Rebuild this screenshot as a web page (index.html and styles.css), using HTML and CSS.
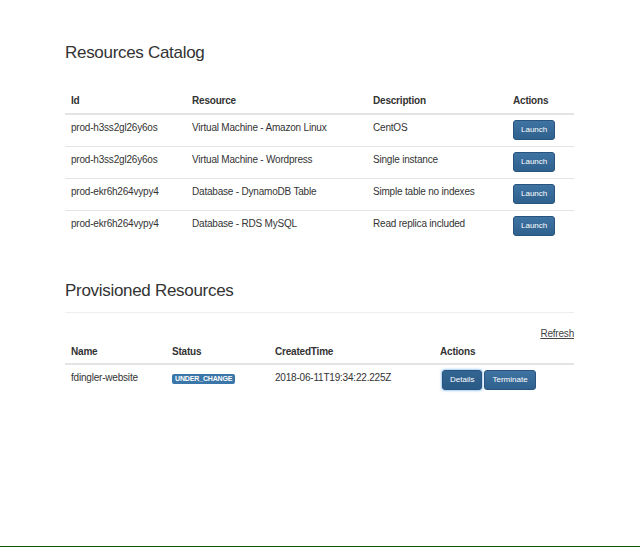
FILE: index.html
```html
<!DOCTYPE html>
<html lang="en">
<head>
<meta charset="utf-8">
<title>Resources</title>
<link rel="stylesheet" href="styles.css">
</head>
<body>
<div class="page">
  <div class="container">
    <h2 class="title">Resources Catalog</h2>
    <table class="table catalog">
      <colgroup>
        <col class="c-id"><col class="c-res"><col class="c-desc"><col class="c-act">
      </colgroup>
      <thead>
        <tr><th>Id</th><th>Resource</th><th>Description</th><th>Actions</th></tr>
      </thead>
      <tbody>
        <tr><td>prod-h3ss2gl26y6os</td><td>Virtual Machine - Amazon Linux</td><td>CentOS</td><td><button class="btn">Launch</button></td></tr>
        <tr><td>prod-h3ss2gl26y6os</td><td>Virtual Machine - Wordpress</td><td>Single instance</td><td><button class="btn">Launch</button></td></tr>
        <tr><td>prod-ekr6h264vypy4</td><td>Database - DynamoDB Table</td><td>Simple table no indexes</td><td><button class="btn">Launch</button></td></tr>
        <tr><td>prod-ekr6h264vypy4</td><td>Database - RDS MySQL</td><td>Read replica included</td><td><button class="btn">Launch</button></td></tr>
      </tbody>
    </table>

    <h2 class="title title-second">Provisioned Resources</h2>
    <hr class="rule">
    <div class="refresh-row"><a class="refresh" href="#">Refresh</a></div>
    <table class="table provisioned">
      <colgroup>
        <col class="c-name"><col class="c-status"><col class="c-time"><col class="c-act2">
      </colgroup>
      <thead>
        <tr><th>Name</th><th>Status</th><th>CreatedTime</th><th>Actions</th></tr>
      </thead>
      <tbody>
        <tr>
          <td>fdingler-website</td>
          <td><span class="label">UNDER_CHANGE</span></td>
          <td>2018-06-11T19:34:22.225Z</td>
          <td><div class="btn-group"><button class="btn btn-focus">Details</button><button class="btn">Terminate</button></div></td>
        </tr>
      </tbody>
    </table>
  </div>
</div>
</body>
</html>
```
FILE: styles.css
```css
* { box-sizing: border-box; }
html, body { margin: 0; padding: 0; background: #fff; }
body {
  font-family: "Liberation Sans", Arial, Helvetica, sans-serif;
  font-size: 10px;
  letter-spacing: -0.2px;
  color: #333;
}
.page {
  min-height: 547px;
  border-bottom: 1px solid #0b560b;
  padding-top: 43px;
}
.container {
  margin-left: 65px;
  width: 509px;
}
.title {
  margin: 0;
  font-size: 17px;
  line-height: 20px;
  letter-spacing: -0.3px;
  font-weight: normal;
  color: #333;
}
.catalog { margin-top: 21px; }
.title-second { margin-top: 39px; }
.rule {
  margin: 11px 0 0;
  border: 0;
  border-top: 1px solid #eee;
  height: 0;
}
.refresh-row {
  margin-top: 14px;
  text-align: right;
  line-height: 14px;
}
.refresh {
  color: #444;
  text-decoration: underline;
  font-size: 10px;
}
.table {
  width: 509px;
  border-collapse: collapse;
  table-layout: fixed;
}
.table th {
  text-align: left;
  font-weight: bold;
  line-height: 16px;
  padding: 9px 6px 4px;
  border-bottom: 2px solid #e4e4e4;
  vertical-align: bottom;
}
.provisioned th { padding: 3px 6px 3px; }
.table td {
  padding: 5px 6px 6px;
  line-height: 15px;
  vertical-align: top;
  border-top: 1px solid #e4e4e4;
  white-space: nowrap;
}
.table tbody tr:first-child td { border-top: 0; }
.c-id { width: 121px; }
.c-res { width: 181px; }
.c-desc { width: 140px; }
.c-act { width: 67px; }
.c-name { width: 101px; }
.c-status { width: 103px; }
.c-time { width: 165px; }
.c-act2 { width: 140px; }

.btn {
  display: inline-block;
  vertical-align: top;
  height: 20px;
  padding: 0 7px;
  margin: 0;
  font-family: "Liberation Sans", Arial, Helvetica, sans-serif;
  font-size: 8px;
  letter-spacing: 0;
  line-height: 18px;
  color: #fff;
  background: linear-gradient(#3e73a2, #30618e);
  border: 1px solid #2a5480;
  border-radius: 3px;
  cursor: pointer;
}
.btn-group {
  display: flex;
  gap: 2px;
  padding-left: 2px;
}
.btn-focus {
  background: linear-gradient(#336592, #2a5a86);
  box-shadow: 0 0 2px 1px rgba(110, 175, 235, 0.6);
}
.label {
  display: inline-block;
  vertical-align: top;
  margin-top: 4px;
  padding: 1px 3px 1px;
  font-size: 7px;
  line-height: 8px;
  font-weight: bold;
  color: #fff;
  background: #3b76a8;
  border-radius: 2px;
  letter-spacing: -0.15px;
}
```
